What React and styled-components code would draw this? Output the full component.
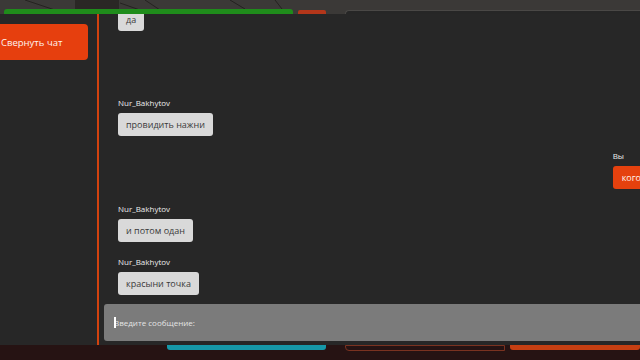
import React from "react";
import styled, { createGlobalStyle } from "styled-components";

const Global = createGlobalStyle`
  html, body { margin: 0; padding: 0; background: #2a1616; }
  body { font-family: "Open Sans", "Noto Sans", sans-serif; }
  * { box-sizing: border-box; }
`;

const Screen = styled.div`
  width: 640px;
  height: 360px;
  overflow: hidden;
  display: flex;
  flex-direction: column;
  background: #2a1616;
`;

const TopHud = styled.div`
  position: relative;
  height: 14px;
  flex: none;
  display: flex;
  align-items: flex-end;
  padding-left: 4px;
  background: #3b3937;
`;

const SceneArt = styled.svg`
  position: absolute;
  inset: 0;
`;

const HealthBar = styled.div`
  position: relative;
  width: 289px;
  height: 5px;
  border-radius: 3px 3px 0 0;
  background: #1f8c1b;
`;

const DangerBar = styled.div`
  position: relative;
  width: 28px;
  height: 4px;
  margin-left: 5px;
  border-radius: 2px 2px 0 0;
  background: #b3361a;
`;

const PanelLip = styled.div`
  position: relative;
  flex: 1;
  height: 4px;
  margin-left: 19px;
  border-top: 1px solid #4a4846;
  border-left: 1px solid #4a4846;
  border-top-left-radius: 4px;
  background: #262626;
`;

const Panel = styled.div`
  flex: 1;
  display: flex;
  min-height: 0;
  background: #272727;
`;

const Sidebar = styled.div`
  width: 99px;
  flex: none;
  border-right: 2px solid #d2420f;
  padding-top: 10px;
`;

const CollapseButton = styled.button`
  display: flex;
  align-items: center;
  width: 88px;
  height: 36px;
  padding: 0 0 0 1px;
  border: none;
  border-radius: 0 4px 4px 0;
  background: #e63f0e;
  color: #fff3ee;
  font-family: inherit;
  font-size: 9.5px;
  cursor: pointer;
`;

const ChatColumn = styled.div`
  flex: 1;
  display: flex;
  flex-direction: column;
  min-width: 0;
  padding: 0 0 4px 5px;
`;

const MessageList = styled.div`
  flex: 1;
  min-height: 0;
  overflow: hidden;
  display: flex;
  flex-direction: column;
  justify-content: flex-end;
  padding: 0 0 9px 14px;
  margin-right: -10px;
`;

const Group = styled.div`
  display: flex;
  flex-direction: column;
  align-items: flex-start;
  align-self: ${(p) => (p.$mine ? "flex-end" : "flex-start")};
  margin-top: ${(p) => p.$gap}px;
`;

const Author = styled.div`
  height: 12px;
  line-height: 12px;
  margin-bottom: 4px;
  font-size: 8px;
  color: #ececec;
`;

const Bubble = styled.div`
  height: 23px;
  display: flex;
  align-items: center;
  padding: 0 ${(p) => (p.$mine ? 9 : 8)}px;
  border-radius: 3px;
  font-size: 9px;
  background: ${(p) => (p.$mine ? "#e5410e" : "#d9d9d9")};
  color: ${(p) => (p.$mine ? "#fff2ec" : "#3a3a3a")};
`;

const InputWrap = styled.div`
  height: 37px;
  flex: none;
  margin-right: -10px;
  display: flex;
  align-items: center;
  padding-left: 10px;
  border-radius: 3px 0 0 3px;
  background: #7b7b7b;
`;

const Caret = styled.span`
  width: 2px;
  height: 11px;
  background: #ffffff;
  margin-right: -2px;
  position: relative;
`;

const Field = styled.input`
  flex: 1;
  border: none;
  outline: none;
  background: transparent;
  font-family: inherit;
  font-size: 8px;
  color: #ececec;
  padding: 0;
  &::placeholder { color: #e4e4e4; }
`;

const BottomHud = styled.div`
  height: 15px;
  flex: none;
  display: flex;
  align-items: flex-start;
  background: #261313;
`;

const Bar = styled.div`
  height: ${(p) => p.$h || 5}px;
  width: ${(p) => p.$w}px;
  margin-left: ${(p) => p.$ml || 0}px;
  background: ${(p) => p.$bg};
  border: ${(p) => p.$border || "none"};
  border-radius: ${(p) => p.$r || "0 0 3px 3px"};
`;

const messages = [
  { author: null, text: "да", gap: 0 },
  { author: "Nur_Bakhytov", text: "провидить нажни", gap: 66 },
  { author: "Вы", text: "кого", mine: true, gap: 14 },
  { author: "Nur_Bakhytov", text: "и потом одан", gap: 14 },
  { author: "Nur_Bakhytov", text: "красыни точка", gap: 14 },
];

export default function App() {
  return (
    <Screen>
      <Global />
      <TopHud>
        <SceneArt width="640" height="14" viewBox="0 0 640 14">
          <rect x="75" y="0" width="44" height="10" fill="#2a2725" />
          <g stroke="#242220" strokeWidth="1">
            <line x1="25" y1="0" x2="55" y2="10" />
            <line x1="120" y1="3" x2="140" y2="10" />
            <line x1="145" y1="0" x2="160" y2="10" />
            <line x1="230" y1="0" x2="245" y2="9" />
            <line x1="275" y1="0" x2="282" y2="9" />
          </g>
        </SceneArt>
        <HealthBar />
        <DangerBar />
        <PanelLip />
      </TopHud>
      <Panel>
        <Sidebar>
          <CollapseButton>Свернуть чат</CollapseButton>
        </Sidebar>
        <ChatColumn>
          <MessageList>
            {messages.map((m, i) => (
              <Group key={i} $mine={m.mine} $gap={m.gap}>
                {m.author && <Author>{m.author}</Author>}
                <Bubble $mine={m.mine}>{m.text}</Bubble>
              </Group>
            ))}
          </MessageList>
          <InputWrap>
            <Caret />
            <Field placeholder="Введите сообщение:" />
          </InputWrap>
        </ChatColumn>
      </Panel>
      <BottomHud>
        <Bar $w={159} $ml={167} $bg="#1698a8" />
        <Bar $w={160} $ml={19} $h={6} $bg="transparent" $border="1px solid #7a3220" $r="0 0 0 4px" />
        <Bar $w={130} $ml={5} $bg="#c53f12" />
      </BottomHud>
    </Screen>
  );
}
